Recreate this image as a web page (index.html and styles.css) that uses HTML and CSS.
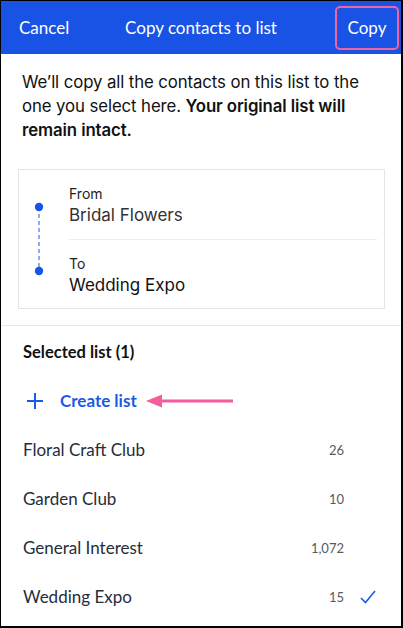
FILE: index.html
```html
<!DOCTYPE html>
<html>
<head>
<meta charset="utf-8">
<link rel="stylesheet" href="styles.css">
</head>
<body>
<div class="frame">
  <header class="topbar">
    <span class="cancel">Cancel</span>
    <span class="title">Copy contacts to list</span>
    <span class="copy">Copy</span>
  </header>

  <p class="intro">We’ll copy all the contacts on this list to the one you select here. <strong>Your original list will remain intact.</strong></p>

  <div class="card">
    <div class="timeline">
      <svg width="50" height="138" viewBox="0 0 50 138">
        <line x1="20" y1="37" x2="20" y2="101" stroke="#6f98f2" stroke-width="1.6" stroke-dasharray="4 3"/>
        <circle cx="20" cy="37" r="4.2" fill="#1556e8"/>
        <circle cx="20" cy="101" r="4.2" fill="#1556e8"/>
      </svg>
    </div>
    <div class="fields">
      <div class="field">
        <div class="label">From</div>
        <div class="value muted">Bridal Flowers</div>
      </div>
      <div class="field">
        <div class="label">To</div>
        <div class="value">Wedding Expo</div>
      </div>
    </div>
  </div>

  <section class="lists">
    <div class="row heading">Selected list (1)</div>
    <div class="row create">
      <svg class="plus" width="18" height="18" viewBox="0 0 18 18">
        <path d="M9 1v16M1 9h16" stroke="#1a5be6" stroke-width="2" fill="none"/>
      </svg>
      <span class="create-text">Create list</span>
      <svg class="arrow" width="90" height="16" viewBox="0 0 90 16">
        <path d="M14 8H87" stroke="#f45d9b" stroke-width="3" fill="none"/>
        <path d="M0 8L16 1.5V14.5Z" fill="#f45d9b"/>
      </svg>
    </div>
    <div class="row item"><span class="name">Floral Craft Club</span><span class="count">26</span><span class="check"></span></div>
    <div class="row item"><span class="name">Garden Club</span><span class="count">10</span><span class="check"></span></div>
    <div class="row item"><span class="name">General Interest</span><span class="count">1,072</span><span class="check"></span></div>
    <div class="row item"><span class="name">Wedding Expo</span><span class="count">15</span><span class="check">
      <svg width="16" height="14" viewBox="0 0 16 14"><path d="M1 8l4.5 4.5L15 1" stroke="#1a5be6" stroke-width="1.6" fill="none"/></svg>
    </span></div>
  </section>
</div>
</body>
</html>
```

FILE: styles.css
```css
* { box-sizing: border-box; }
html, body { margin: 0; padding: 0; background: #fff; }
.frame {
  width: 403px;
  height: 628px;
  border-top: 1px solid #000;
  border-left: 1px solid #000;
  border-right: 2px solid #000;
  border-bottom: 2px solid #000;
  overflow: hidden;
  background: #fff;
}
.topbar {
  height: 53px;
  background: #1853e6;
  color: #fff;
  display: grid;
  grid-template-columns: 1fr auto 1fr;
  align-items: center;
  font-family: Lato, "Open Sans", sans-serif;
  font-size: 17px;
}
.cancel { padding-left: 18px; justify-self: start; }
.title { justify-self: center; }
.copy {
  justify-self: end;
  margin-right: 2px;
  width: 64px;
  height: 44px;
  border: 2.5px solid #f0659e;
  border-radius: 5px;
  display: flex;
  align-items: center;
  justify-content: center;
}
.intro {
  margin: 16px 0 0;
  padding: 0 21px;
  font-family: Inter, "Liberation Sans", sans-serif;
  font-size: 16.8px;
  line-height: 24px;
  color: #111;
  letter-spacing: -0.1px;
}
.intro strong { font-weight: 600; }
.card {
  margin: 27px 16px 0 17px;
  height: 140px;
  border: 1px solid #e5e5e5;
  display: flex;
}
.timeline { width: 50px; flex: none; }
.timeline svg { display: block; }
.fields { flex: 1; margin-right: 7px; display: flex; flex-direction: column; }
.field { height: 69px; padding-top: 14px; font-family: Inter, "Liberation Sans", sans-serif; }
.field + .field { border-top: 1px solid #ececec; height: 69px; }
.label { font-size: 14px; line-height: 20px; color: #222; }
.value { font-size: 17px; line-height: 22px; color: #111; }
.value.muted { color: #333; }
.lists {
  margin-top: 16px;
  border-top: 1px solid #e8e8e8;
  font-family: Lato, "Open Sans", sans-serif;
}
.row {
  height: 49px;
  display: flex;
  align-items: center;
  padding-left: 22px;
  padding-top: 2px;
}
.heading { font-weight: 700; font-size: 16.5px; color: #111; }
.create { padding-left: 25px; }
.plus { display: block; }
.create-text {
  margin-left: 16px;
  color: #1a5be6;
  font-weight: 700;
  font-size: 17px;
}
.arrow { margin-left: 9px; display: block; }
.item { font-size: 17px; color: #262d3b; }
.name { flex: 1; }
.count { font-size: 13px; color: #555b66; }
.check { width: 57px; flex: none; padding-left: 16px; display: flex; align-items: center; }
.check svg { display: block; }
```
